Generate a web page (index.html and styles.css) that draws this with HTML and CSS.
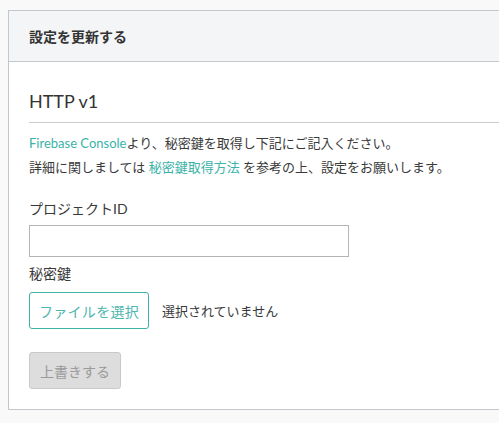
FILE: index.html
```html
<!DOCTYPE html>
<html lang="ja">
<head>
<meta charset="utf-8">
<link rel="stylesheet" href="styles.css">
</head>
<body>
<div class="card">
  <div class="card-header">設定を更新する</div>
  <div class="card-body">
    <h3 class="section-title">HTTP v1</h3>
    <p class="desc"><a class="link">Firebase Console</a>より、秘密鍵を取得し下記にご記入ください。<br>詳細に関しましては <a class="link">秘密鍵取得方法</a> を参考の上、設定をお願いします。</p>
    <label class="label label-first">プロジェクトID</label>
    <input class="text-input" type="text">
    <label class="label">秘密鍵</label>
    <div class="file-row">
      <span class="file-btn">ファイルを選択</span>
      <span class="file-name">選択されていません</span>
    </div>
    <button class="submit" disabled>上書きする</button>
  </div>
</div>
</body>
</html>
```

FILE: styles.css
```css
html, body {
  margin: 0;
  padding: 0;
  overflow: hidden;
  background: #f9f9f9;
}
body {
  font-family: Lato, "Noto Sans CJK JP", sans-serif;
  color: #3a3a3a;
  padding: 10px 0 0 8px;
}
.card {
  background: #fff;
  border: 1px solid #c3c7cc;
  border-right: none;
}
.card-header {
  height: 50px;
  display: flex;
  align-items: center;
  padding: 0 20px;
  background: #f4f5f7;
  border-bottom: 1px solid #c3c7cc;
  font-size: 14px;
  font-weight: 700;
  color: #333;
}
.card-body {
  padding: 27px 0 20px 20px;
  display: flex;
  flex-direction: column;
  align-items: flex-start;
}
.section-title {
  align-self: stretch;
  margin: 0;
  font-size: 18px;
  font-weight: 400;
  line-height: 24px;
  padding-bottom: 9px;
  border-bottom: 1px solid #c8cacd;
  color: #333;
}
.desc {
  margin: 8px 0 0;
  font-size: 13px;
  line-height: 24px;
}
.link {
  color: #3bb3a8;
  text-decoration: none;
}
.label {
  display: block;
  font-size: 14px;
  line-height: 20px;
  margin-top: 7px;
  margin-bottom: 8px;
}
.label-first {
  margin-top: 20px;
  margin-bottom: 6px;
}
.text-input {
  box-sizing: border-box;
  width: 320px;
  height: 32px;
  margin: 0;
  border: 1px solid #b5b5b5;
  border-radius: 0;
  padding: 0 8px;
  font: inherit;
}
.file-row {
  display: flex;
  align-items: center;
  gap: 13px;
}
.file-btn {
  box-sizing: border-box;
  height: 37px;
  width: 120px;
  display: flex;
  align-items: center;
  justify-content: center;
  border: 1px solid #3bb3a8;
  border-radius: 3px;
  color: #4db6ad;
  font-size: 14px;
  letter-spacing: 0.3px;
}
.file-name {
  font-size: 13px;
}
.submit {
  box-sizing: border-box;
  margin-top: 23px;
  height: 37px;
  width: 92px;
  padding: 0;
  background: #dddddd;
  border: 1px solid #c9c9c9;
  border-radius: 3px;
  color: #9a9a9a;
  font-family: Lato, "Noto Sans CJK JP", sans-serif;
  font-size: 14px;
}
```
